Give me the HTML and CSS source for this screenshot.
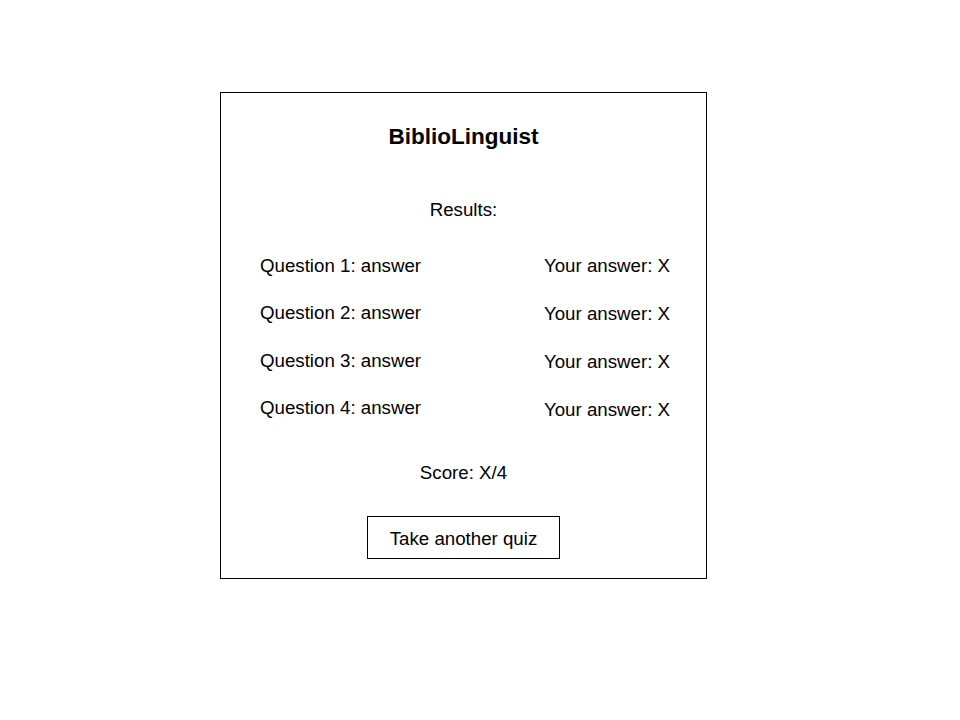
FILE: index.html
```html
<!DOCTYPE html>
<html lang="en">
<head>
<meta charset="utf-8">
<title>BiblioLinguist - Results</title>
<link rel="stylesheet" href="styles.css">
</head>
<body>
<main class="page">
  <section class="card">
    <h1 class="title">BiblioLinguist</h1>
    <p class="results-label">Results:</p>
    <div class="results">
      <ul class="col col-questions">
        <li>Question 1: answer</li>
        <li>Question 2: answer</li>
        <li>Question 3: answer</li>
        <li>Question 4: answer</li>
      </ul>
      <ul class="col col-answers">
        <li>Your answer: X</li>
        <li>Your answer: X</li>
        <li>Your answer: X</li>
        <li>Your answer: X</li>
      </ul>
    </div>
    <p class="score">Score: X/4</p>
    <button class="btn" type="button">Take another quiz</button>
  </section>
</main>
</body>
</html>
```
FILE: styles.css
```css
* { box-sizing: border-box; }
html, body { margin: 0; padding: 0; background: #fff; }
body {
  font-family: "Liberation Sans", Arial, sans-serif;
  color: #000;
  font-size: 18.7px;
  line-height: 20px;
}
.page {
  padding: 92px 0 0 220px;
}
.card {
  width: 487px;
  height: 487px;
  border: 1px solid #000;
  display: flex;
  flex-direction: column;
  align-items: center;
  padding-top: 31px;
}
.title {
  margin: 0;
  font-size: 22.5px;
  line-height: 26px;
  font-weight: bold;
}
.results-label {
  margin: 50px 0 0;
}
.results {
  align-self: stretch;
  display: flex;
  justify-content: space-between;
  padding: 0 36px 0 39px;
  margin-top: 36px;
}
.col {
  list-style: none;
  margin: 0;
  padding: 0;
  display: flex;
  flex-direction: column;
}
.col-questions { gap: 27.3px; }
.col-answers { gap: 28px; }
.score {
  margin: 43px 0 0;
}
.btn {
  margin-top: 33px;
  width: 193px;
  height: 43px;
  border: 1px solid #000;
  background: #fff;
  font-family: inherit;
  font-size: 18.7px;
  color: #000;
  padding: 2px 0 0;
}
```
